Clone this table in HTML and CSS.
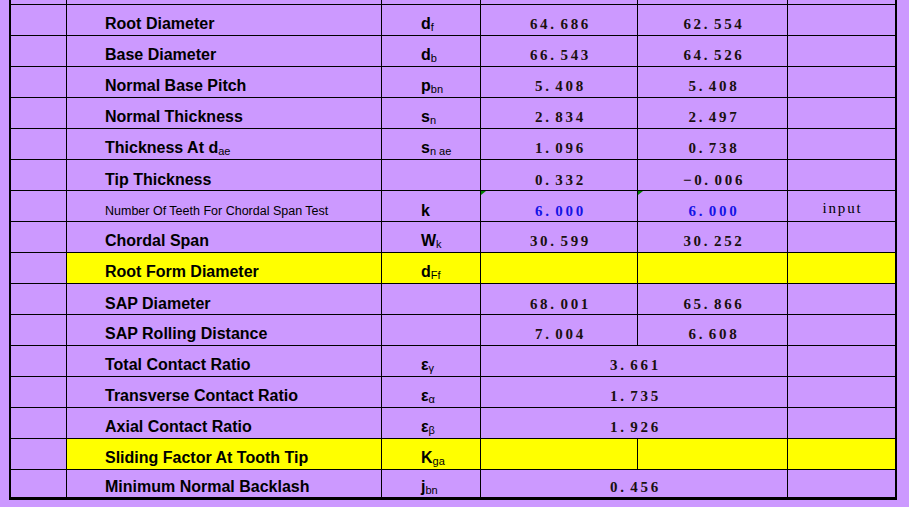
FILE: index.html
```html
<!DOCTYPE html>
<html>
<head>
<meta charset="utf-8">
<link rel="stylesheet" href="styles.css">
</head>
<body>
<div class="sheet">
  <div class="row">
    <div class="c"></div>
    <div class="c lbl"></div>
    <div class="c sym">d<span class="sub">a</span></div>
    <div class="c num"></div>
    <div class="c num"></div>
    <div class="c"></div>
  </div>
  <div class="row">
    <div class="c"></div>
    <div class="c lbl">Root Diameter</div>
    <div class="c sym">d<span class="sub">f</span></div>
    <div class="c num">64<span class="pt">.</span>686</div>
    <div class="c num">62<span class="pt">.</span>554</div>
    <div class="c"></div>
  </div>
  <div class="row">
    <div class="c"></div>
    <div class="c lbl">Base Diameter</div>
    <div class="c sym">d<span class="sub">b</span></div>
    <div class="c num">66<span class="pt">.</span>543</div>
    <div class="c num">64<span class="pt">.</span>526</div>
    <div class="c"></div>
  </div>
  <div class="row">
    <div class="c"></div>
    <div class="c lbl">Normal Base Pitch</div>
    <div class="c sym">p<span class="sub">bn</span></div>
    <div class="c num">5<span class="pt">.</span>408</div>
    <div class="c num">5<span class="pt">.</span>408</div>
    <div class="c"></div>
  </div>
  <div class="row">
    <div class="c"></div>
    <div class="c lbl">Normal Thickness</div>
    <div class="c sym">s<span class="sub">n</span></div>
    <div class="c num">2<span class="pt">.</span>834</div>
    <div class="c num">2<span class="pt">.</span>497</div>
    <div class="c"></div>
  </div>
  <div class="row">
    <div class="c"></div>
    <div class="c lbl">Thickness At d<span class="sub">ae</span></div>
    <div class="c sym">s<span class="sub">n ae</span></div>
    <div class="c num">1<span class="pt">.</span>096</div>
    <div class="c num">0<span class="pt">.</span>738</div>
    <div class="c"></div>
  </div>
  <div class="row low">
    <div class="c"></div>
    <div class="c lbl">Tip Thickness</div>
    <div class="c sym"></div>
    <div class="c num">0<span class="pt">.</span>332</div>
    <div class="c num">&minus;0<span class="pt">.</span>006</div>
    <div class="c"></div>
  </div>
  <div class="row low">
    <div class="c"></div>
    <div class="c lbl small">Number Of Teeth For Chordal Span Test</div>
    <div class="c sym">k</div>
    <div class="c num blue flag">6<span class="pt">.</span>000</div>
    <div class="c num blue flag">6<span class="pt">.</span>000</div>
    <div class="c note">input</div>
  </div>
  <div class="row">
    <div class="c"></div>
    <div class="c lbl">Chordal Span</div>
    <div class="c sym">W<span class="sub">k</span></div>
    <div class="c num">30<span class="pt">.</span>599</div>
    <div class="c num">30<span class="pt">.</span>252</div>
    <div class="c"></div>
  </div>
  <div class="row hl">
    <div class="c"></div>
    <div class="c lbl">Root Form Diameter</div>
    <div class="c sym">d<span class="sub">Ff</span></div>
    <div class="c num"></div>
    <div class="c num"></div>
    <div class="c"></div>
  </div>
  <div class="row low">
    <div class="c"></div>
    <div class="c lbl">SAP Diameter</div>
    <div class="c sym"></div>
    <div class="c num">68<span class="pt">.</span>001</div>
    <div class="c num">65<span class="pt">.</span>866</div>
    <div class="c"></div>
  </div>
  <div class="row">
    <div class="c"></div>
    <div class="c lbl">SAP Rolling Distance</div>
    <div class="c sym"></div>
    <div class="c num">7<span class="pt">.</span>004</div>
    <div class="c num">6<span class="pt">.</span>608</div>
    <div class="c"></div>
  </div>
  <div class="row">
    <div class="c"></div>
    <div class="c lbl">Total Contact Ratio</div>
    <div class="c sym">&epsilon;<span class="sub">&gamma;</span></div>
    <div class="c num wide">3<span class="pt">.</span>661</div>
    <div class="c"></div>
  </div>
  <div class="row">
    <div class="c"></div>
    <div class="c lbl">Transverse Contact Ratio</div>
    <div class="c sym">&epsilon;<span class="sub">&alpha;</span></div>
    <div class="c num wide">1<span class="pt">.</span>735</div>
    <div class="c"></div>
  </div>
  <div class="row">
    <div class="c"></div>
    <div class="c lbl">Axial Contact Ratio</div>
    <div class="c sym">&epsilon;<span class="sub">&beta;</span></div>
    <div class="c num wide">1<span class="pt">.</span>926</div>
    <div class="c"></div>
  </div>
  <div class="row hl">
    <div class="c"></div>
    <div class="c lbl">Sliding Factor At Tooth Tip</div>
    <div class="c sym">K<span class="sub">ga</span></div>
    <div class="c num"></div>
    <div class="c num"></div>
    <div class="c"></div>
  </div>
  <div class="row low end">
    <div class="c"></div>
    <div class="c lbl">Minimum Normal Backlash</div>
    <div class="c sym">j<span class="sub">bn</span></div>
    <div class="c num wide">0<span class="pt">.</span>456</div>
    <div class="c"></div>
  </div>
</div>
</body>
</html>
```

FILE: styles.css
```css
html, body {
  margin: 0;
  background: #cc99ff;
}
body {
  height: 507px;
  overflow: hidden;
  font-family: "Liberation Sans", Arial, sans-serif;
  color: #000;
}
.sheet {
  margin: -26px 0 0 9px;
  width: 888px;
  box-sizing: border-box;
  border-left: 2px solid #000;
  border-right: 2px solid #000;
  border-bottom: 3px solid #000;
}
.row {
  display: grid;
  grid-template-columns: 56px 315px 99px 157px 150px 107px;
  height: 31px;
  box-sizing: border-box;
  border-bottom: 1px solid #000;
}
.row.end {
  height: 27px;
  border-bottom: 0;
}
.c {
  display: flex;
  align-items: flex-end;
  box-sizing: border-box;
  border-right: 1px solid #000;
  padding-bottom: 2px;
  line-height: 18px;
  white-space: nowrap;
}
.c:last-child {
  border-right: 0;
}
.low .c {
  padding-bottom: 1px;
}
.hl .c:not(:first-child) {
  background: #ffff00;
}
.lbl {
  padding-left: 38px;
  font-size: 16px;
  font-weight: bold;
}
.lbl.small {
  font-size: 12.5px;
  font-weight: normal;
}
.sym {
  padding-left: 39px;
  font-size: 16px;
  font-weight: bold;
}
.sub {
  font-size: 11px;
  font-weight: normal;
  vertical-align: -3px;
  line-height: 11px;
}
.num {
  justify-content: center;
  padding-left: 3px;
  font-family: "Liberation Serif", "Times New Roman", serif;
  font-size: 15px;
  font-weight: bold;
  letter-spacing: 2.7px;
  color: #1a1010;
}
.num.wide {
  grid-column: span 2;
}
.pt {
  margin-right: 3.7px;
}
.blue {
  color: #1414e6;
}
.flag {
  position: relative;
}
.flag::before {
  content: "";
  position: absolute;
  left: 0;
  top: 0;
  width: 0;
  height: 0;
  border-top: 4px solid #008000;
  border-right: 5px solid transparent;
}
.low .c.note {
  justify-content: center;
  padding-left: 2px;
  padding-bottom: 4px;
  font-family: "Liberation Serif", "Times New Roman", serif;
  font-size: 15px;
  letter-spacing: 1.8px;
}
```
